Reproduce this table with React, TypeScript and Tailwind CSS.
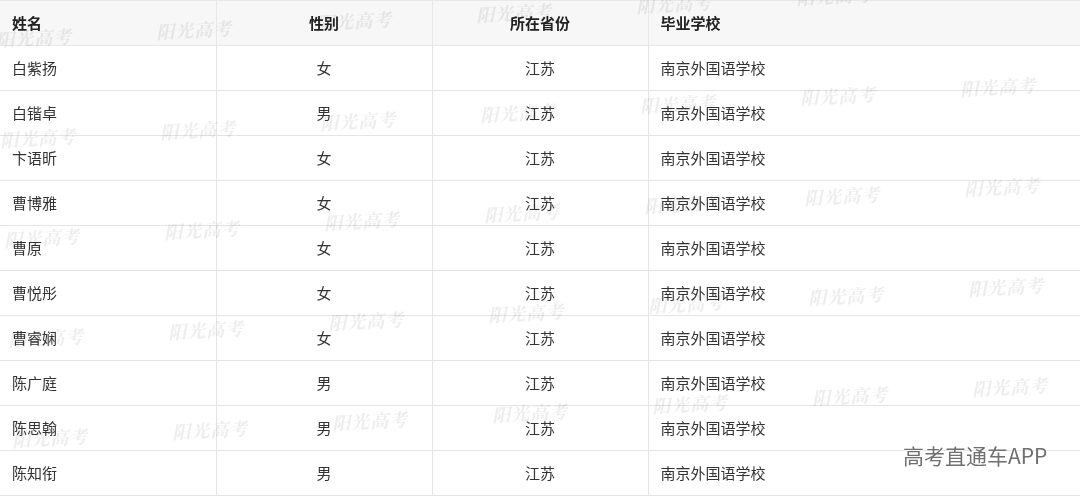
import React from "react";

type Student = { name: string; gender: string; province: string; school: string };

const students: Student[] = [
  { name: "白紫扬", gender: "女", province: "江苏", school: "南京外国语学校" },
  { name: "白锴卓", gender: "男", province: "江苏", school: "南京外国语学校" },
  { name: "卞语昕", gender: "女", province: "江苏", school: "南京外国语学校" },
  { name: "曹博雅", gender: "女", province: "江苏", school: "南京外国语学校" },
  { name: "曹原", gender: "女", province: "江苏", school: "南京外国语学校" },
  { name: "曹悦彤", gender: "女", province: "江苏", school: "南京外国语学校" },
  { name: "曹睿娴", gender: "女", province: "江苏", school: "南京外国语学校" },
  { name: "陈广庭", gender: "男", province: "江苏", school: "南京外国语学校" },
  { name: "陈思翰", gender: "男", province: "江苏", school: "南京外国语学校" },
  { name: "陈知衔", gender: "男", province: "江苏", school: "南京外国语学校" },
];

// watermark grid: 7 across, 5 down, each row sloping up a little
const marks: { x: number; y: number }[] = [];
for (let j = 0; j < 5; j++) {
  for (let i = 0; i < 7; i++) {
    marks.push({ x: -4 + 160 * i + 4 * j, y: 28 + 100 * j - 8.5 * i });
  }
}

export default function App() {
  return (
    <div
      className="relative h-[497px] w-[1080px] overflow-hidden bg-white text-[15px] text-[#333]"
      style={{ fontFamily: '"Noto Sans CJK SC", "Noto Sans", sans-serif' }}
    >
      <table className="w-[1080px] table-fixed border-collapse">
        <colgroup>
          <col className="w-[216px]" />
          <col className="w-[216px]" />
          <col className="w-[216px]" />
          <col className="w-[432px]" />
        </colgroup>
        <thead>
          <tr className="h-[45px] bg-[#f7f7f7] text-[#222]">
            <th className="border border-l-0 border-[#e8e8e8] pl-3 text-left font-semibold">姓名</th>
            <th className="border border-[#e8e8e8] text-center font-semibold">性别</th>
            <th className="border border-[#e8e8e8] text-center font-semibold">所在省份</th>
            <th className="border border-r-0 border-[#e8e8e8] pl-3 text-left font-semibold">毕业学校</th>
          </tr>
        </thead>
        <tbody>
          {students.map((s) => (
            <tr key={s.name} className="h-[45px]">
              <td className="border border-l-0 border-[#e5e5e5] pl-3">{s.name}</td>
              <td className="border border-[#e5e5e5] text-center">{s.gender}</td>
              <td className="border border-[#e5e5e5] text-center">{s.province}</td>
              <td className="border border-r-0 border-[#e5e5e5] pl-3">{s.school}</td>
            </tr>
          ))}
        </tbody>
      </table>

      {/* watermark layer */}
      <div className="pointer-events-none absolute inset-0">
        {marks.map((m, k) => (
          <span
            key={k}
            className="absolute -rotate-3 whitespace-nowrap text-[18px] font-bold italic leading-none tracking-[1px] text-[#ededed] mix-blend-multiply"
            style={{ left: m.x, top: m.y, fontFamily: '"Noto Serif CJK SC", "Noto Sans CJK SC", serif' }}
          >
            阳光高考
          </span>
        ))}
      </div>

      <div className="absolute left-[903px] top-[445px] whitespace-nowrap text-[21px] leading-none text-[#707070] [text-shadow:0_0_2px_#fff,0_0_2px_#fff]">
        高考直通车APP
      </div>
    </div>
  );
}
